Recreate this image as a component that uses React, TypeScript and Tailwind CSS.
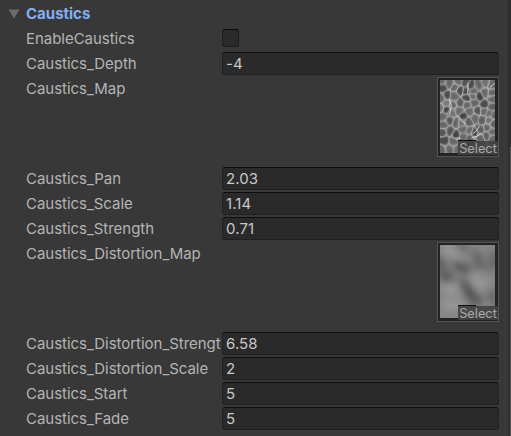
import type { ReactNode } from "react";

type Point = [number, number];

// x, y, darkness (0..1) of every cell of the caustics texture
const cells: [number, number, number][] = [
  [8, 22, 0.9], [28, 10, 0.5], [46, 20, 0.5], [5, 4, 0.4], [20, 48, 0.9], [75, 8, 0.8],
  [92, 18, 0.9], [60, 30, 0.9], [78, 33, 0.9], [55, 6, 0.4], [118, 15, 0.5], [135, 10, 0.3],
  [156, 15, 0.4], [118, 49, 1], [82, 54, 0.9], [42, 50, 0.4], [6, 55, 0.5], [135, 38, 0.4],
  [154, 38, 0.5], [99, 50, 0.5], [100, 34, 0.5], [18, 88, 1], [38, 75, 0.4], [60, 70, 0.6],
  [82, 74, 0.5], [103, 68, 0.5], [134, 75, 0.9], [158, 58, 0.4], [156, 80, 0.6], [56, 92, 0.4],
  [70, 108, 1], [90, 95, 0.4], [112, 92, 0.7], [36, 98, 0.3], [132, 94, 0.5], [148, 100, 0.4],
  [30, 122, 0.7], [47, 128, 0.5], [65, 130, 0.3], [85, 125, 0.6], [105, 115, 0.4], [127, 121, 0.6],
  [146, 122, 0.3], [161, 104, 0.5], [159, 132, 0.6], [8, 110, 0.5], [12, 135, 0.5], [10, 156, 0.7],
  [29, 153, 0.7], [48, 165, 1], [70, 149, 0.5], [88, 152, 0.4], [103, 158, 0.9], [121, 148, 0.6],
  [142, 143, 0.5], [156, 156, 0.4], [140, 168, 0.6], [122, 175, 0.5], [15, 182, 0.9],
  [38, 185, 0.5], [70, 170, 0.5], [88, 175, 0.6], [6, 209, 0.5], [29, 207, 0.5], [157, 175, 0.5],
  [52, 208, 0.4], [20, 70, 0.2], [2, 85, 0.3],
];

function cellPolygon(index: number): Point[] {
  let poly: Point[] = [[-8, -8], [174, -8], [174, 228], [-8, 228]];
  const [sx, sy] = cells[index];
  cells.forEach(([ox, oy], other) => {
    if (other === index) return;
    const nx = ox - sx;
    const ny = oy - sy;
    const limit = (nx * (ox + sx) + ny * (oy + sy)) / 2;
    const side = (p: Point) => p[0] * nx + p[1] * ny - limit;
    const next: Point[] = [];
    poly.forEach((a, i) => {
      const b = poly[(i + 1) % poly.length];
      const da = side(a);
      const db = side(b);
      if (da <= 0) next.push(a);
      if ((da < 0 && db > 0) || (da > 0 && db < 0)) {
        const t = da / (da - db);
        next.push([a[0] + (b[0] - a[0]) * t, a[1] + (b[1] - a[1]) * t]);
      }
    });
    poly = next;
  });
  return poly;
}

function roundedPath(poly: Point[], scale: number, cx: number, cy: number) {
  const pts = poly.map(([x, y]): Point => [cx + (x - cx) * scale, cy + (y - cy) * scale]);
  const mid = (a: Point, b: Point) => `${(a[0] + b[0]) / 2} ${(a[1] + b[1]) / 2}`;
  return (
    `M${mid(pts[pts.length - 1], pts[0])}` +
    pts.map((p, i) => `Q${p[0]} ${p[1]} ${mid(p, pts[(i + 1) % pts.length])}`).join("") +
    "Z"
  );
}

function CausticsTexture() {
  const shapes = cells.map(([x, y, dark], i) => ({ x, y, dark, poly: cellPolygon(i) }));
  return (
    <svg viewBox="0 0 165 219" preserveAspectRatio="none" className="block h-[73px] w-[55px]">
      <defs>
        <filter id="soft"><feGaussianBlur stdDeviation="1.4" /></filter>
        <filter id="core"><feGaussianBlur stdDeviation="2.4" /></filter>
      </defs>
      <rect width="165" height="219" fill="#b0b0b0" />
      <g filter="url(#core)">
        {shapes.map(({ x, y, dark, poly }, i) => (
          <path key={i} d={roundedPath(poly, 0.94, x, y)} fill="#262626" fillOpacity={0.3 + dark * 0.5} />
        ))}
      </g>
      <g filter="url(#soft)" fill="none" stroke="#e4e4e4">
        {shapes.map(({ x, y, poly, dark }, i) => (
          <path key={i} d={roundedPath(poly, 1.04, x, y)} strokeWidth={1.4 + dark} strokeOpacity={0.15 + ((i * 7) % 5) * 0.1} />
        ))}
        <path
          d="M54 106L63 119L76 133M98 162L112 149L119 137M84 8L83 42M150 22L164 10M46 174L62 174M94 174L112 168L124 161M28 58L34 78L29 104"
          strokeWidth="3"
          strokeOpacity="0.8"
        />
      </g>
    </svg>
  );
}

function DistortionTexture() {
  return (
    <svg viewBox="0 0 165 219" preserveAspectRatio="none" className="block h-[73px] w-[55px]">
      <defs>
        <filter id="cloud" filterUnits="userSpaceOnUse" x="-60" y="-60" width="285" height="340">
          <feGaussianBlur stdDeviation="12" />
        </filter>
      </defs>
      <rect width="165" height="219" fill="#868686" />
      <g filter="url(#cloud)" fill="none" strokeLinecap="round">
        <path d="M-6 50L4 60M6 90L28 98M48 58L84 76" stroke="#505050" strokeWidth="26" />
        <path d="M74 112L90 150L112 168" stroke="#4e4e4e" strokeWidth="28" />
        <path d="M62 0L68 16M108 28L124 64M164 28L158 64" stroke="#585858" strokeWidth="22" />
        <path d="M152 142L168 172" stroke="#5c5c5c" strokeWidth="22" />
        <path d="M22 10L58 34M92 96L132 122M18 132L48 136M22 180L60 180" stroke="#9c9c9c" strokeWidth="24" />
      </g>
    </svg>
  );
}

function Row({ label, children }: { label: string; children?: ReactNode }) {
  return (
    <div className="flex h-[25px] items-start">
      <div className="h-[25px] w-[195px] shrink-0 overflow-hidden whitespace-nowrap leading-[26px] tracking-[-0.03px]">{label}</div>
      <div className="ml-px flex min-w-0 flex-1 pt-px">{children}</div>
    </div>
  );
}

function NumberRow({ label, value }: { label: string; value: string }) {
  return (
    <Row label={label}>
      <div className="h-[23px] w-[277px] rounded-[3px] border border-[#212121] border-t-[#0d0d0d] bg-[#2a2a2a] pl-[3px] leading-[21px] tracking-[0.1px] text-[#c8c8c8]">
        {value}
      </div>
    </Row>
  );
}

function TextureRow({ label, children }: { label: string; children: ReactNode }) {
  return (
    <div className="flex h-[90px] items-start">
      <div className="w-[195px] shrink-0 leading-[26px] tracking-[-0.03px]">{label}</div>
      <div className="relative ml-[216px] mt-[1px] h-[80px] w-[62px] border border-[#555] bg-[#232323] pl-[2px] pt-[2px]">
        {children}
        <div className="absolute bottom-px right-0 flex h-[14px] w-[40px] items-center justify-center bg-[#414141]/90 pt-[2px] text-[12.8px] leading-none text-[#a8a8a8]">
          <span className="absolute left-0 top-[-1px] h-px w-[18px] bg-[#101010]" />
          Select
        </div>
      </div>
    </div>
  );
}

export default function App() {
  return (
    <main className="flex h-[436px] w-[511px] overflow-hidden bg-[#383838] font-['Inter',sans-serif] text-[15px] text-[#b4b4b4]">
      <div className="w-[508px] pl-[26px] pt-[1px]">
        <div className="-ml-[18px] flex h-[25px] items-center">
          <svg viewBox="0 0 12 10" className="h-[10px] w-[12px]"><path d="M0.5 0.5H11.5L6 9.5Z" fill="#6c6c6c" /></svg>
          <h2 className="ml-[6px] font-bold leading-[25px] text-[#82aff0]">Caustics</h2>
        </div>
        <Row label="EnableCaustics">
          <div className="mt-[2px] h-[18px] w-[17px] rounded-[3px] border border-[#1c1c1c] border-t-[#0d0d0d] bg-[#2a2a2a]" />
        </Row>
        <NumberRow label="Caustics_Depth" value="-4" />
        <TextureRow label="Caustics_Map"><CausticsTexture /></TextureRow>
        <NumberRow label="Caustics_Pan" value="2.03" />
        <NumberRow label="Caustics_Scale" value="1.14" />
        <NumberRow label="Caustics_Strength" value="0.71" />
        <TextureRow label="Caustics_Distortion_Map"><DistortionTexture /></TextureRow>
        <NumberRow label="Caustics_Distortion_Strength" value="6.58" />
        <NumberRow label="Caustics_Distortion_Scale" value="2" />
        <NumberRow label="Caustics_Start" value="5" />
        <NumberRow label="Caustics_Fade" value="5" />
      </div>
      <div className="h-full w-[3px] border-l border-[#2c2c2c] bg-[#303030] pl-px pt-[147px]">
        <div className="h-full w-px bg-[#555]" />
      </div>
    </main>
  );
}
